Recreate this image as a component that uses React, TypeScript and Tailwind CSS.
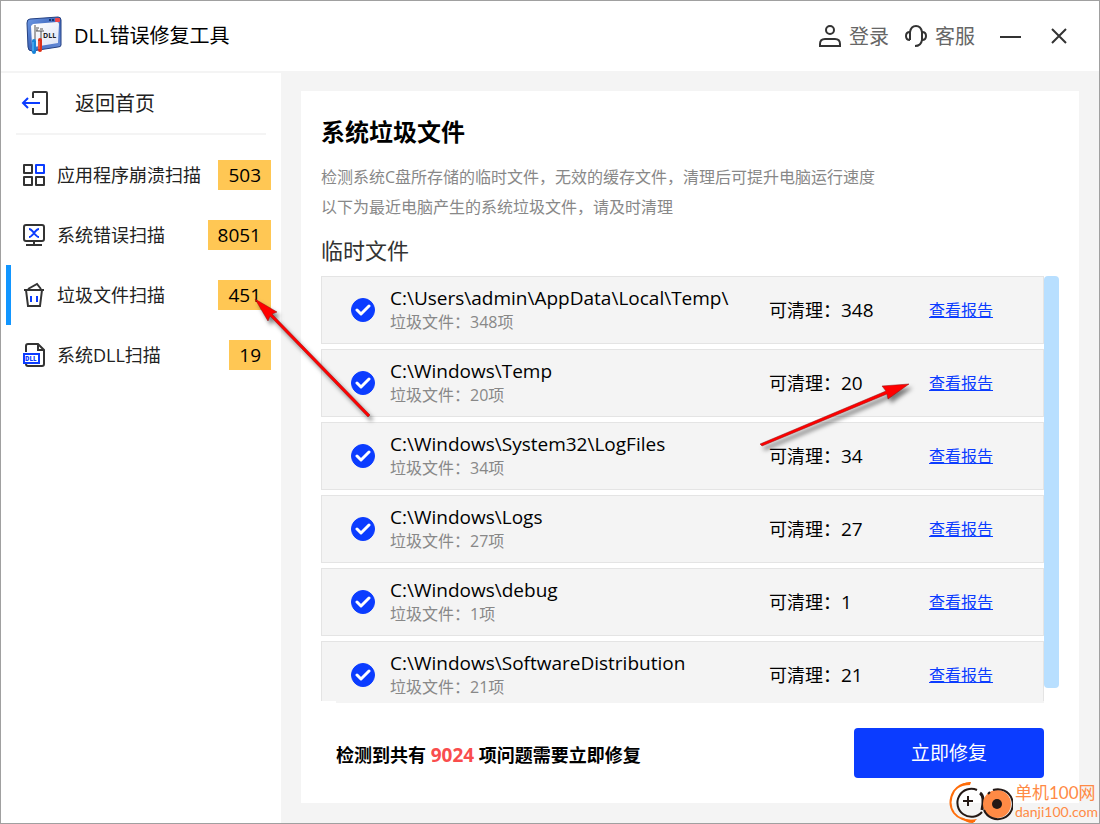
import clsx from "clsx";
import type { ReactNode } from "react";

const scans = [
  { label: "应用程序崩溃扫描", count: 503, icon: <GridIcon /> },
  { label: "系统错误扫描", count: 8051, icon: <MonitorIcon /> },
  { label: "垃圾文件扫描", count: 451, icon: <TrashIcon />, active: true },
  { label: "系统DLL扫描", count: 19, icon: <DllFileIcon /> },
];

const folders = [
  { path: "C:\\Users\\admin\\AppData\\Local\\Temp\\", count: 348 },
  { path: "C:\\Windows\\Temp", count: 20 },
  { path: "C:\\Windows\\System32\\LogFiles", count: 34 },
  { path: "C:\\Windows\\Logs", count: 27 },
  { path: "C:\\Windows\\debug", count: 1 },
  { path: "C:\\Windows\\SoftwareDistribution", count: 21 },
];

function AppLogo() {
  return (
    <svg width="38" height="40" viewBox="0 0 38 40" aria-hidden="true">
      <defs>
        <linearGradient id="frame" x1="0" y1="0" x2="1" y2="1">
          <stop offset="0" stopColor="#6f9be6" />
          <stop offset="0.5" stopColor="#3f68bd" />
          <stop offset="1" stopColor="#6f93dc" />
        </linearGradient>
        <linearGradient id="pane" x1="0" y1="0" x2="1" y2="1">
          <stop offset="0" stopColor="#ffffff" />
          <stop offset="1" stopColor="#dfe5f5" />
        </linearGradient>
      </defs>
      <path d="M4 3 L32 1 Q35 1 35 4 L35 29 Q35 31 32 31 L6 35 Q2 35 2 31 L1 7 Q1 3 4 3Z" fill="url(#frame)" stroke="#233f80" />
      <path d="M7 8 L31 6 Q33 6 33 8 L32 27 L8 31 Q6 31 6 29 L5 10Z" fill="url(#pane)" />
      <path d="M23 4h2M26 4h2" stroke="#18366f" strokeWidth="2" />
      <rect x="29" y="2" width="5" height="4" rx="1" fill="#f0474a" />
      <path d="M9 9V24M15 15V24M10 12h3M10 15h8M11 13v2M14 13h3" fill="none" stroke="#555" strokeWidth="1" />
      <text x="17" y="22" fontSize="7" fontWeight="700" fill="#222" fontFamily="Open Sans, sans-serif">DLL</text>
      <path d="M8 25V36" stroke="#1683d8" strokeWidth="4" strokeLinecap="round" />
      <path d="M14 24V34" stroke="#dd3018" strokeWidth="4" strokeLinecap="round" />
      <path d="M7 26V35" stroke="#6cc0ff" />
      <path d="M13 25V33" stroke="#ff7b5e" />
    </svg>
  );
}

function BackIcon() {
  return (
    <svg width="28" height="26" viewBox="0 0 28 26" fill="none" strokeWidth="2" aria-hidden="true">
      <path d="M12 8V3Q12 2 13 2H25Q26 2 26 3V23Q26 24 25 24H13Q12 24 12 23V18" stroke="#333" />
      <path d="M19 13H2M7 8L2 13L7 18" stroke="#0b3cff" />
    </svg>
  );
}

function GridIcon() {
  return (
    <svg width="22" height="22" viewBox="0 0 22 22" fill="none" stroke="#333" strokeWidth="2" strokeLinejoin="round" aria-hidden="true">
      <path d="M1 1H9V9H1ZM1 13H9V21H1ZM13 13H21V21H13Z" />
      <path d="M13 1H21V9H13Z" stroke="#0b3cff" />
    </svg>
  );
}

function MonitorIcon() {
  return (
    <svg width="22" height="22" viewBox="0 0 22 22" fill="none" stroke="#333" strokeWidth="2" aria-hidden="true">
      <rect x="1" y="1" width="20" height="16" rx="2" />
      <path d="M11 17V21" />
      <path d="M3 21H19" />
      <path d="M6 5Q8 5 11 9Q14 5 16 5M6 13Q8 13 11 9Q14 13 16 13" stroke="#0b3cff" />
    </svg>
  );
}

function TrashIcon() {
  return (
    <svg width="22" height="26" viewBox="0 0 22 26" fill="none" stroke="#333" strokeWidth="2" aria-hidden="true">
      <path d="M1 8H21M3 8L5 24H17L19 8" />
      <path d="M5 7L14 2L18 7" />
      <path d="M8 14V20M14 14V20" stroke="#0b3cff" />
    </svg>
  );
}

function DllFileIcon() {
  return (
    <svg width="22" height="24" viewBox="0 0 22 24" fill="none" stroke="#333" strokeWidth="2" aria-hidden="true">
      <path d="M3 9V3Q3 1 5 1H15L21 7V21Q21 23 19 23H5Q3 23 3 21" />
      <path d="M15 1V7H21" />
      <rect x="1" y="11" width="15" height="9" fill="#fff" stroke="#0b3cff" />
      <text x="2" y="18" fontSize="6" fontWeight="800" fill="#0b3cff" stroke="none" fontFamily="Open Sans, sans-serif">DLL</text>
    </svg>
  );
}

function UserIcon() {
  return (
    <svg width="22" height="22" viewBox="0 0 22 22" fill="none" stroke="#333" strokeWidth="2" aria-hidden="true">
      <circle cx="11" cy="5" r="4" />
      <path d="M1 21V19Q1 14 6 14H16Q21 14 21 19V21Z" />
    </svg>
  );
}

function HeadsetIcon() {
  return (
    <svg width="22" height="22" viewBox="0 0 22 22" fill="none" stroke="#333" strokeWidth="2" aria-hidden="true">
      <path d="M5 15V7Q6 1 11 1Q16 1 17 7V15Q16 21 10 21" />
      <path d="M5 7Q1 7 1 11Q1 15 5 15M17 7Q21 7 21 11Q21 15 17 15" />
    </svg>
  );
}

function TitleBar() {
  return (
    <header className="flex h-[70px] shrink-0 items-center bg-white pl-[25px] pr-8">
      <AppLogo />
      <h1 className="ml-[10px] flex-1 text-xl text-black">DLL错误修复工具</h1>
      <button type="button" className="flex items-center gap-2 text-xl text-[#666]">
        <UserIcon />
        <span className="pt-[2px]">登录</span>
      </button>
      <button type="button" className="ml-4 flex items-center gap-2 text-xl text-[#666]">
        <HeadsetIcon />
        <span className="pt-[2px]">客服</span>
      </button>
      <button type="button" aria-label="最小化" className="ml-6">
        <svg width="22" height="22" viewBox="0 0 22 22" stroke="#333" strokeWidth="2">
          <path d="M1 12H22" />
        </svg>
      </button>
      <button type="button" aria-label="关闭" className="ml-[30px]">
        <svg width="16" height="16" viewBox="0 0 16 16" stroke="#333" strokeWidth="2">
          <path d="M1 1L15 15M15 1L1 15" />
        </svg>
      </button>
    </header>
  );
}

type ScanItemProps = { label: string; count: number; icon: ReactNode; active?: boolean };

function ScanItem({ label, count, icon, active }: ScanItemProps) {
  return (
    <button
      type="button"
      className={clsx(
        "flex h-[60px] w-full items-center border-l-[5px] pl-3 pr-[10px] text-left",
        active ? "border-[#1296ff]" : "border-transparent"
      )}
    >
      <span className="flex w-[22px] justify-center">{icon}</span>
      <span className="ml-3 flex-1 text-lg leading-[30px] text-[#222]">{label}</span>
      <span className="bg-[#ffc754] px-[10px] text-[19px] leading-[30px] text-black">{count}</span>
    </button>
  );
}

function Sidebar() {
  return (
    <aside className="w-[280px] shrink-0 border-t-2 border-[#f4f4f4] bg-white">
      <div className="mx-[15px] border-b-2 border-[#f4f4f4]">
        <button type="button" className="flex h-[60px] items-center gap-[26px] pl-[5px] text-xl text-[#222]">
          <BackIcon />
          <span className="pt-[2px]">返回首页</span>
        </button>
      </div>
      <nav className="mt-[10px] pl-[5px]">
        {scans.map((scan) => (
          <ScanItem key={scan.label} {...scan} />
        ))}
      </nav>
    </aside>
  );
}

function FolderRow({ path, count }: { path: string; count: number }) {
  return (
    <li className="flex h-[68px] shrink-0 items-center border border-[#e4e4e4] bg-[#f4f4f4] pl-[29px]">
      <label className="grid size-6 shrink-0 place-items-center">
        <input
          type="checkbox"
          defaultChecked
          aria-label={path}
          className="peer col-start-1 row-start-1 size-6 appearance-none rounded-full border border-[#0b3cff] checked:bg-[#0b3cff]"
        />
        <svg
          className="invisible col-start-1 row-start-1 peer-checked:visible"
          width="16"
          height="12"
          viewBox="0 0 16 12"
          fill="none"
          stroke="#fff"
          strokeWidth="3"
          strokeLinecap="round"
          strokeLinejoin="round"
        >
          <path d="M2 6L6 10L14 2" />
        </svg>
      </label>
      <div className="ml-[15px] min-w-0 flex-1">
        <p className="truncate text-[19px] leading-6 text-black">{path}</p>
        <p className="text-base leading-6 text-[#888]">垃圾文件：{count}项</p>
      </div>
      <p className="w-[160px] pt-[2px] text-lg text-black">
        可清理：<span className="text-[19px]">{count}</span>
      </p>
      <div className="w-[114px]">
        <a href="#report" className="text-base text-[#0b3cff] underline">
          查看报告
        </a>
      </div>
    </li>
  );
}

// Red pointers drawn over the window
function Arrows() {
  return (
    <svg
      className="pointer-events-none absolute left-[238px] top-[278px] drop-shadow-[3px_4px_2px_rgba(0,0,0,0.5)]"
      width="690"
      height="180"
      viewBox="0 0 690 180"
      stroke="#8a1010"
      strokeWidth="0.5"
      fill="#f00"
      aria-hidden="true"
    >
      <path d="M16 20L38 33L33 35L131 136L129 138L31 37L29 42Z" />
      <path d="M670 105L649 120L648 115L523 167L521 165L647 112L643 107Z" />
    </svg>
  );
}

function Watermark() {
  return (
    <div className="absolute bottom-0 right-0 flex items-center gap-[2px] pr-px font-['Lato','Noto_Sans_CJK_SC',sans-serif] text-[#ff8a45]">
      <svg width="64" height="42" viewBox="0 0 64 42" fill="none" aria-hidden="true">
        <path d="M21 3Q12 1 5 10Q-2 22 5 32Q11 40 26 40" stroke="#ff6d0a" strokeWidth="2" />
        <path d="M9 7Q15 0 22 1L21 4Q14 4 9 7ZM12 36Q18 40 28 38L24 42Q16 42 12 36Z" fill="#ff6d0a" />
        <path d="M28 9A14 14 0 1 0 33 31" stroke="#231815" strokeWidth="2" />
        <path d="M31 12Q36 15 33 29" stroke="#231815" strokeWidth="3" />
        <circle cx="48" cy="23" r="14" fill="#ff8a45" />
        <path d="M44 9A15 15 0 1 1 35 29M39 13L41 11" stroke="#231815" strokeWidth="2" />
        <circle cx="48" cy="23" r="5" fill="#231815" />
        <path d="M14 20H24M19 15V25" stroke="#231815" strokeWidth="2" />
      </svg>
      <div>
        <p className="text-[17px] leading-5">单机100网</p>
        <p className="text-sm leading-[18px]">danji100.com</p>
      </div>
    </div>
  );
}

export default function App() {
  return (
    <div className="relative flex h-screen min-h-[600px] flex-col overflow-hidden border border-[#a0a0a0] bg-[#f4f4f4] font-['Open_Sans','Noto_Sans_CJK_SC',sans-serif]">
      <TitleBar />
      <div className="flex min-h-0 flex-1">
        <Sidebar />
        <main className="m-5 flex min-w-0 flex-1 flex-col bg-white px-5 pt-[23px]">
          <h2 className="text-2xl leading-9 font-bold text-black">系统垃圾文件</h2>
          <p className="mt-3 text-base leading-[30px] text-[#888]">
            检测系统C盘所存储的临时文件，无效的缓存文件，清理后可提升电脑运行速度
            <br />
            以下为最近电脑产生的系统垃圾文件，请及时清理
          </p>
          <h3 className="mt-[10px] text-[22px] leading-9 text-[#333]">临时文件</h3>
          <div className="mt-2 flex min-h-0 flex-1">
            <ul className="flex min-w-0 flex-1 flex-col gap-[5px] overflow-hidden">
              {folders.map((folder) => (
                <FolderRow key={folder.path} {...folder} />
              ))}
            </ul>
            <div className="h-[97%] w-[15px] rounded bg-[#b8dfff]" />
          </div>
          <footer className="mx-[15px] flex h-[102px] shrink-0 items-center justify-between border-t-2 border-[#f4f4f4]">
            <p className="pt-[6px] text-lg font-bold text-black">
              检测到共有 <strong className="text-[19px] font-bold text-[#f94d4d]">9024</strong> 项问题需要立即修复
            </p>
            <button type="button" className="h-[50px] w-[190px] rounded bg-[#0b3cff] text-[19px] text-white">
              立即修复
            </button>
          </footer>
        </main>
      </div>
      <Arrows />
      <Watermark />
    </div>
  );
}
